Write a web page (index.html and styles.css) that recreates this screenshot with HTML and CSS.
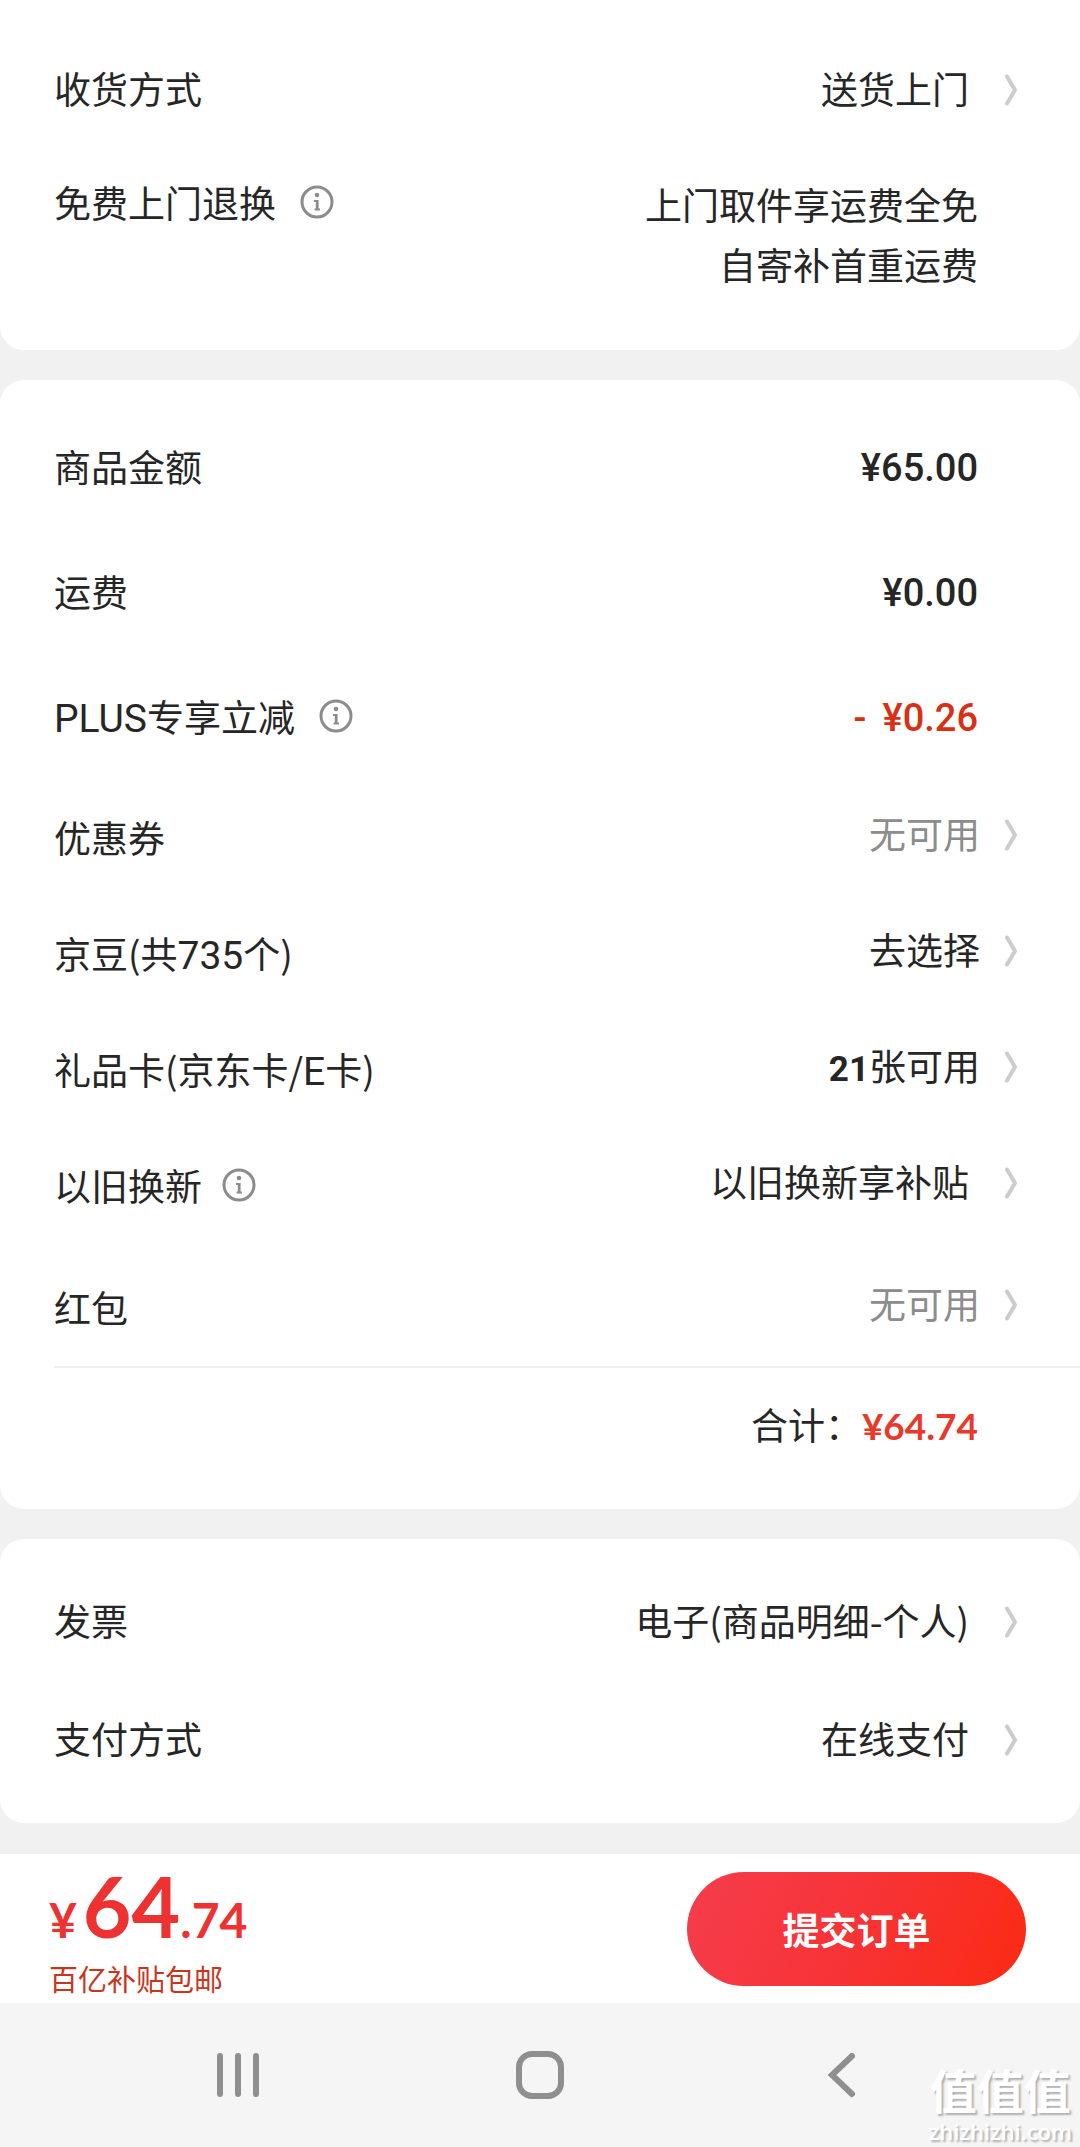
FILE: index.html
```html
<!DOCTYPE html>
<html lang="zh-CN">
<head>
<meta charset="utf-8">
<meta name="viewport" content="width=device-width, initial-scale=1">
<title>确认订单</title>
<link rel="stylesheet" href="styles.css">
</head>
<body>
<svg class="sprite" aria-hidden="true">
  <symbol id="info" viewBox="0 0 34 34">
    <circle cx="17" cy="17" r="15" fill="none" stroke="#8c8c8c" stroke-width="3"/>
    <circle cx="17" cy="10" r="2.3" fill="#8c8c8c"/>
    <path d="M14 15h4.600v8.400H20v2h-5.400v-2h1.200V17H14z" fill="#8c8c8c"/>
  </symbol>
  <symbol id="chevron" viewBox="0 0 14 32">
    <path d="M3 2.500L11 16L3 29.500" fill="none" stroke="#ccc" stroke-width="4" stroke-linecap="round" stroke-linejoin="round"/>
  </symbol>
</svg>

<main class="order">
  <section class="card card--delivery">
    <div class="row row--delivery">
      <span class="label">收货方式</span>
      <a class="value value--link" href="#">送货上门<svg class="chevron"><use href="#chevron"/></svg></a>
    </div>
    <div class="row row--return">
      <span class="label">免费上门退换<button class="info" type="button" aria-label="退换说明"><svg><use href="#info"/></svg></button></span>
      <span class="value">上门取件享运费全免<br>自寄补首重运费</span>
    </div>
  </section>

  <section class="card card--amount">
    <div class="row row--price">
      <span class="label">商品金额</span>
      <span class="value price">¥65.00</span>
    </div>
    <div class="row row--price">
      <span class="label">运费</span>
      <span class="value price">¥0.00</span>
    </div>
    <div class="row row--price">
      <span class="label"><span><span class="latin">PLUS</span>专享立减</span><button class="info" type="button" aria-label="立减说明"><svg><use href="#info"/></svg></button></span>
      <span class="value price price--discount"><span>-</span><span>¥0.26</span></span>
    </div>
    <div class="row row--option">
      <span class="label">优惠券</span>
      <a class="value value--link value--near value--muted" href="#">无可用<svg class="chevron"><use href="#chevron"/></svg></a>
    </div>
    <div class="row row--option">
      <span class="label"><span>京豆(共<span class="latin">735</span>个)</span></span>
      <a class="value value--link value--near" href="#">去选择<svg class="chevron"><use href="#chevron"/></svg></a>
    </div>
    <div class="row row--option">
      <span class="label"><span>礼品卡(京东卡/<span class="latin">E</span>卡)</span></span>
      <a class="value value--link value--near" href="#"><span><b class="count">21</b>张可用</span><svg class="chevron"><use href="#chevron"/></svg></a>
    </div>
    <div class="row row--option">
      <span class="label label--near">以旧换新<button class="info" type="button" aria-label="以旧换新说明"><svg><use href="#info"/></svg></button></span>
      <a class="value value--link" href="#">以旧换新享补贴<svg class="chevron"><use href="#chevron"/></svg></a>
    </div>
    <div class="row row--option row--last">
      <span class="label">红包</span>
      <a class="value value--link value--near value--muted" href="#">无可用<svg class="chevron"><use href="#chevron"/></svg></a>
    </div>
    <div class="row row--total">
      <span class="value">合计：<strong class="total">¥64.74</strong></span>
    </div>
  </section>

  <section class="card card--payment">
    <div class="row">
      <span class="label">发票</span>
      <a class="value value--link" href="#">电子(商品明细-个人)<svg class="chevron"><use href="#chevron"/></svg></a>
    </div>
    <div class="row">
      <span class="label">支付方式</span>
      <a class="value value--link" href="#">在线支付<svg class="chevron"><use href="#chevron"/></svg></a>
    </div>
  </section>
</main>

<footer class="checkout">
  <div class="summary">
    <div class="sum">¥<span class="sum__whole">64</span>.74</div>
    <div class="note">百亿补贴包邮</div>
  </div>
  <button class="submit" type="button">提交订单</button>
</footer>

<nav class="system">
  <button type="button" aria-label="最近任务"><svg width="48" height="48" viewBox="0 0 48 48"><path d="M6 5v38M24 5v38M42 5v38"/></svg></button>
  <button type="button" aria-label="主屏幕"><svg width="48" height="48" viewBox="0 0 48 48"><rect x="3" y="3" width="42" height="42" rx="13"/></svg></button>
  <button type="button" aria-label="返回"><svg width="48" height="48" viewBox="0 0 48 48"><path d="M34 5L14 24L34 43"/></svg></button>
  <div class="watermark">
    <span class="watermark__name">值值值</span>
    <span class="watermark__site">zhizhizhi.com</span>
  </div>
</nav>
</body>
</html>
```
FILE: styles.css
```css
* {
  box-sizing: border-box;
}

body {
  margin: 0;
  background: #f1f1f1;
  color: #262626;
  font-family: "Noto Sans CJK SC", sans-serif;
  font-size: 37px;
  line-height: 60px;
}

a {
  color: inherit;
  text-decoration: none;
}

button {
  padding: 0;
  border: 0;
  background: none;
  font: inherit;
}

.sprite {
  position: absolute;
  width: 0;
  height: 0;
}

.order {
  display: flex;
  flex-direction: column;
  gap: 30px;
  margin-bottom: 31px;
}

.card {
  background: #fff;
  border-radius: 24px;
}

.card--delivery {
  padding: 28px 0 56px;
  border-radius: 0 0 24px 24px;
}

.card--amount {
  padding: 25px 0 27px;
}

.card--payment {
  padding: 22px 0 26px;
}

.row {
  display: flex;
  align-items: center;
  justify-content: space-between;
  min-height: 118px;
  padding-left: 54px;
}

.row--delivery {
  min-height: 120px;
}

.row--return {
  align-items: flex-start;
  padding-top: 26px;
}

.row--return .label {
  margin-top: -2px;
}

.row--price {
  min-height: 125px;
}

.row--option {
  min-height: 116px;
}

.row--last {
  min-height: 122px;
  padding-top: 6px;
}

.row--total {
  justify-content: flex-end;
  min-height: 116px;
  margin-left: 54px;
  padding: 0 0 2px;
  border-top: 2px solid #f0f0f0;
}

.label {
  display: flex;
  align-items: center;
  gap: 24px;
}

.label--near {
  gap: 20px;
}

.card--amount .label {
  padding-bottom: 3px;
}

.latin {
  font-family: Roboto, sans-serif;
  font-size: 39px;
  line-height: 1;
}

.info,
.info svg {
  display: block;
  width: 34px;
  height: 34px;
}

.value {
  margin-right: 102px;
  text-align: right;
}

.value--link {
  display: flex;
  align-items: center;
  gap: 35px;
  margin-right: 62px;
}

.value--near {
  gap: 24px;
}

.row--option .value {
  margin-bottom: 10px;
}

.value--muted {
  color: #8c8c8c;
}

.chevron {
  width: 14px;
  height: 32px;
  margin-top: 3px;
}

.price {
  font-family: Roboto, sans-serif;
  font-weight: 500;
  font-size: 38px;
}

.price--discount {
  display: flex;
  gap: 16px;
  color: #d92f14;
}

.count {
  font-family: Roboto, sans-serif;
  font-weight: 700;
  font-size: 35px;
  line-height: 1;
}

.total {
  color: #e8392d;
  font-family: Lato, sans-serif;
  font-weight: 700;
  font-size: 37px;
  line-height: 1;
}

.checkout {
  display: flex;
  align-items: center;
  justify-content: space-between;
  min-height: 149px;
  padding: 0 54px 0 49px;
  background: #fff;
}

.summary {
  padding-top: 4px;
}

.sum {
  color: #ee3131;
  font-family: Lato, sans-serif;
  font-weight: 700;
  font-size: 48px;
  line-height: 80px;
}

.sum__whole {
  margin-left: 6px;
  font-size: 84px;
}

.note {
  color: #c8361e;
  font-size: 29px;
  line-height: 36px;
}

.submit {
  width: 339px;
  height: 114px;
  border-radius: 57px;
  background: linear-gradient(115deg, #f53d4d, #f73336 50%, #fa2c19 90%);
  color: #fff;
  font-weight: 700;
}

.system {
  position: relative;
  display: grid;
  grid-template-columns: repeat(3, 1fr);
  min-height: 144px;
  padding: 0 8%;
  background: #f5f5f5;
}

.system button {
  display: grid;
  place-items: center;
}

.system svg {
  fill: none;
  stroke: #8f8f8f;
  stroke-width: 6;
  stroke-linecap: round;
}

.watermark {
  position: absolute;
  right: 8px;
  bottom: 4px;
  display: flex;
  flex-direction: column;
  align-items: center;
  color: #fff;
  text-shadow: 2px 2px 2px #b0b0b0;
}

.watermark__name {
  font-weight: 700;
  font-size: 47px;
  line-height: 60px;
}

.watermark__site {
  font-family: "Open Sans", sans-serif;
  font-weight: 600;
  font-size: 22px;
  line-height: 24px;
}
```
